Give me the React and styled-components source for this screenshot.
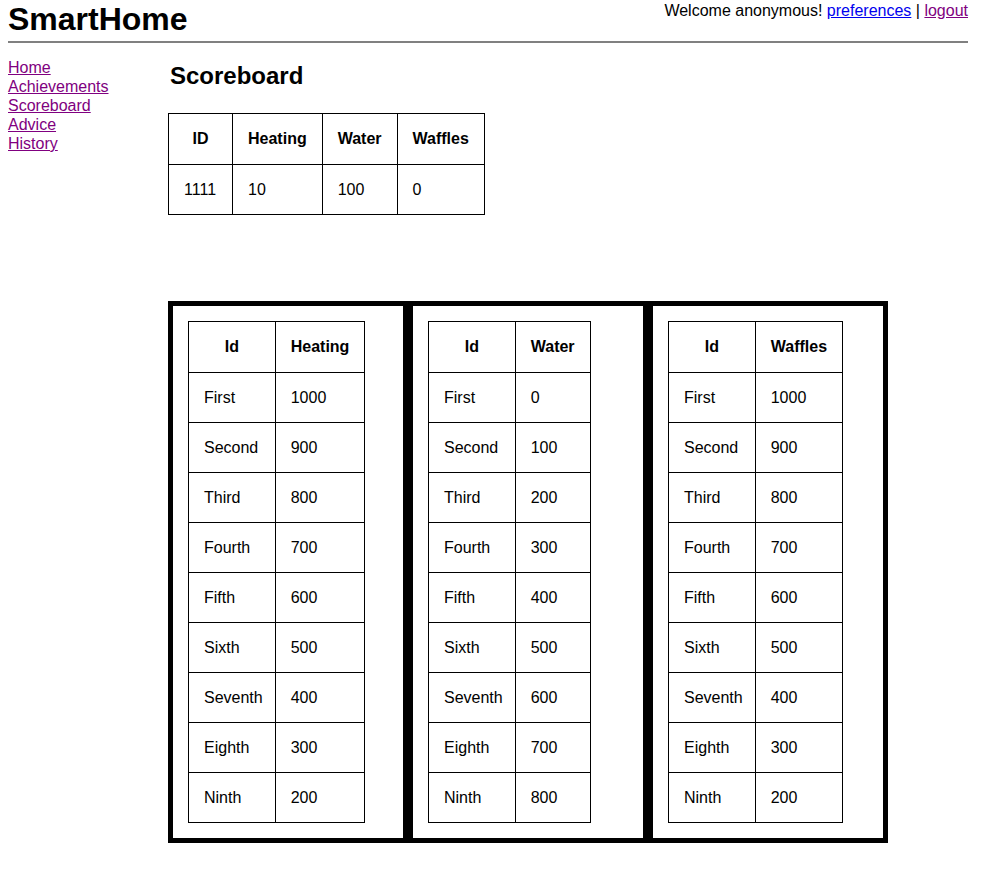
import React from "react";
import styled, { createGlobalStyle } from "styled-components";

const Global = createGlobalStyle`
  html, body { margin: 0; padding: 0; background: #fff; }
  body {
    font-family: "Liberation Sans", Arial, sans-serif;
    font-size: 16px;
    color: #000;
  }
`;

const Page = styled.div`
  width: 960px;
  margin: 0 8px;
`;

const Header = styled.header`
  display: flex;
  justify-content: space-between;
  align-items: flex-start;
`;

const Logo = styled.h1`
  margin: 0;
  padding-top: 1px;
  font-size: 32px;
  line-height: 36px;
  font-weight: bold;
`;

const UserBar = styled.div`
  line-height: 19px;
  margin-top: 1px;
`;

const Link = styled.a`
  color: ${(p) => (p.$visited ? "#800080" : "#0000ee")};
  text-decoration: underline;
  cursor: pointer;
`;

const Rule = styled.hr`
  margin: 4px 0 0;
  border: none;
  height: 2px;
  background: #808080;
`;

const Layout = styled.div`
  display: flex;
  margin-top: 15px;
`;

const Sidebar = styled.nav`
  width: 160px;
  flex: none;
  display: flex;
  flex-direction: column;
  align-items: flex-start;
  line-height: 19px;
`;

const Main = styled.main`
  flex: 1;
`;

const Title = styled.h2`
  margin: 4px 0 23px 2px;
  font-size: 24px;
  line-height: 28px;
  font-weight: bold;
`;

const Table = styled.table`
  border-collapse: collapse;
`;

const Th = styled.th`
  border: 1px solid #000;
  padding: 15px;
  line-height: 20px;
  font-weight: bold;
  text-align: center;
  min-width: ${(p) => p.$minWidth || "0"};
`;

const Td = styled.td`
  border: 1px solid #000;
  padding: 15px 12px 15px 15px;
  line-height: 19px;
  text-align: left;
`;

const Boards = styled.div`
  display: flex;
  margin-top: 86px;
`;

const Panel = styled.div`
  width: 240px;
  box-sizing: border-box;
  border: 5px solid #000;
  padding: 15px;
`;

const places = ["First", "Second", "Third", "Fourth", "Fifth", "Sixth", "Seventh", "Eighth", "Ninth"];

const boards = [
  { name: "Heating", values: [1000, 900, 800, 700, 600, 500, 400, 300, 200] },
  { name: "Water", values: [0, 100, 200, 300, 400, 500, 600, 700, 800] },
  { name: "Waffles", values: [1000, 900, 800, 700, 600, 500, 400, 300, 200] },
];

export default function App() {
  return (
    <Page>
      <Global />
      <Header>
        <Logo>SmartHome</Logo>
        <UserBar>
          Welcome anonymous! <Link>preferences</Link> | <Link $visited>logout</Link>
        </UserBar>
      </Header>
      <Rule />
      <Layout>
        <Sidebar>
          <Link $visited>Home</Link>
          <Link $visited>Achievements</Link>
          <Link $visited>Scoreboard</Link>
          <Link $visited>Advice</Link>
          <Link $visited>History</Link>
        </Sidebar>
        <Main>
          <Title>Scoreboard</Title>
          <Table>
            <thead>
              <tr>
                <Th $minWidth="33px">ID</Th>
                <Th>Heating</Th>
                <Th>Water</Th>
                <Th>Waffles</Th>
              </tr>
            </thead>
            <tbody>
              <tr>
                <Td>1111</Td>
                <Td>10</Td>
                <Td>100</Td>
                <Td>0</Td>
              </tr>
            </tbody>
          </Table>
          <Boards>
            {boards.map((b) => (
              <Panel key={b.name}>
                <Table>
                  <thead>
                    <tr>
                      <Th>Id</Th>
                      <Th>{b.name}</Th>
                    </tr>
                  </thead>
                  <tbody>
                    {places.map((p, i) => (
                      <tr key={p}>
                        <Td>{p}</Td>
                        <Td>{b.values[i]}</Td>
                      </tr>
                    ))}
                  </tbody>
                </Table>
              </Panel>
            ))}
          </Boards>
        </Main>
      </Layout>
    </Page>
  );
}
